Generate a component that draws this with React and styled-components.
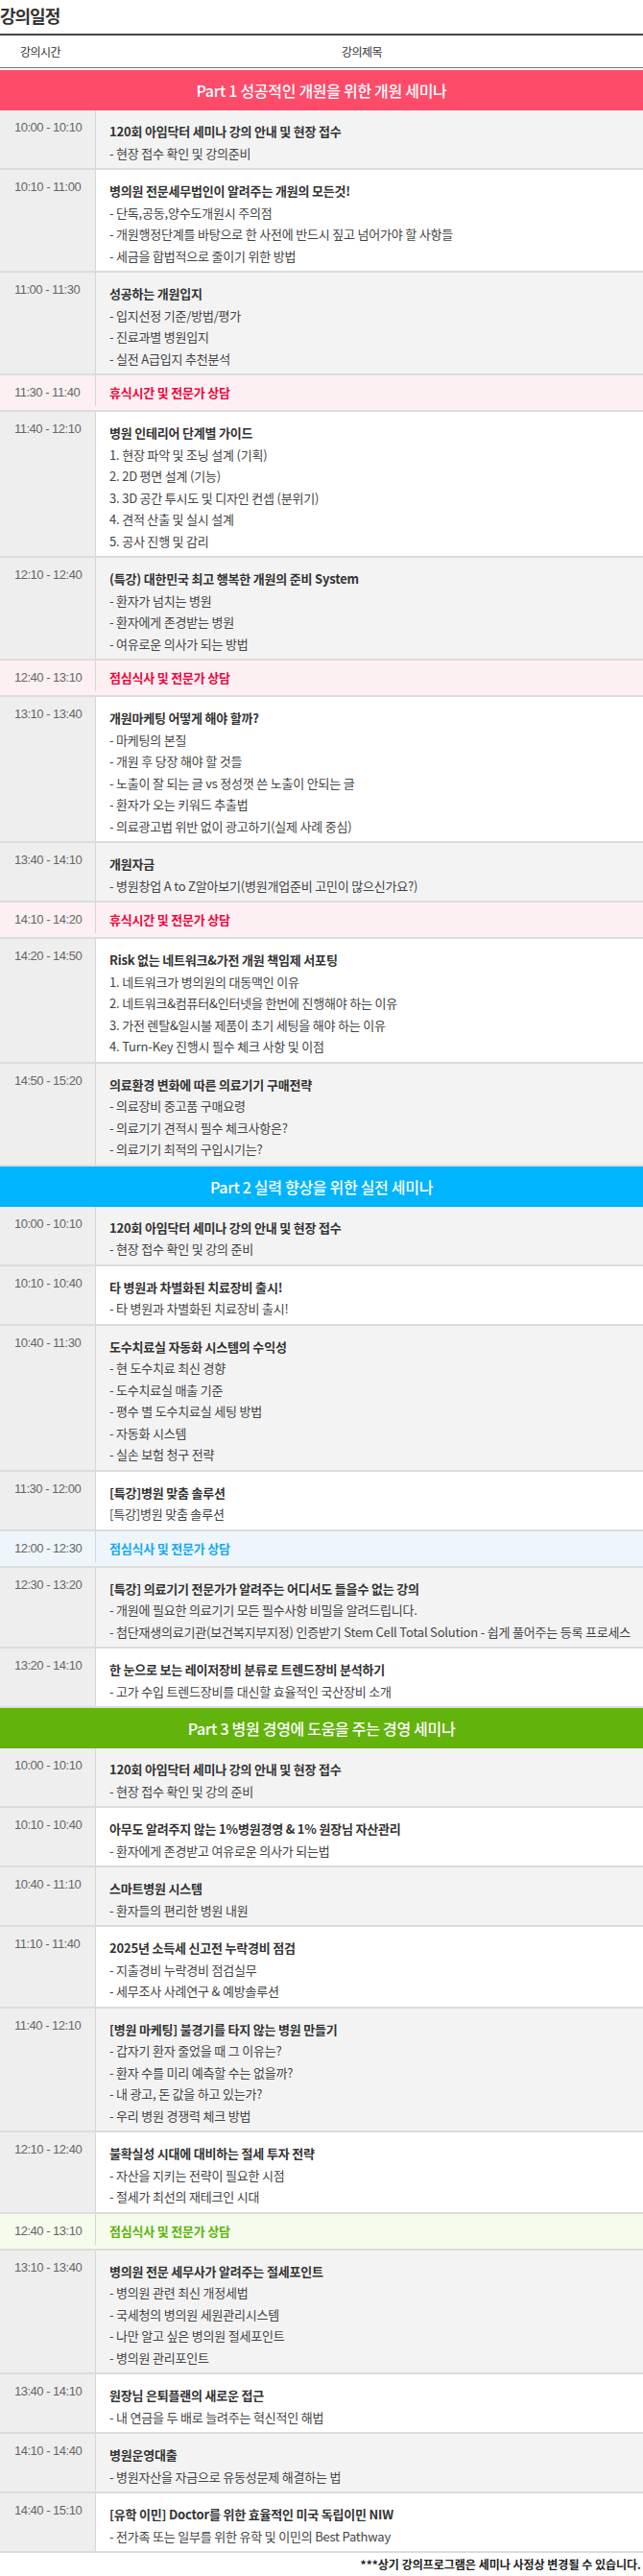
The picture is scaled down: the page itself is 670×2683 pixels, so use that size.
import React from 'react';
import styled, { createGlobalStyle } from 'styled-components';

const GlobalStyle = createGlobalStyle`
    body {
        margin: 0;
        background: #fff;
        font-family: "Noto Sans CJK KR", "Noto Sans", sans-serif;
        color: #333;
    }
`

const Page = styled.div`
    width: 670px;
`

const PageTitle = styled.h2`
    margin: 0;
    height: 35px;
    line-height: 32px;
    font-size: 18px;
    font-weight: 700;
    letter-spacing: -1px;
    color: #333;
`

const Table = styled.div`
    border-top: 2px solid #444;
`

const HeaderRow = styled.div`
    display: grid;
    grid-template-columns: 84px 1fr;
    height: 33px;
    align-items: center;
    border-bottom: 1px solid #777;
    margin-bottom: 2px;
`

const HeaderCell = styled.div`
    text-align: center;
    font-size: 12px;
    letter-spacing: -0.5px;
    color: #333;
`

const PartBanner = styled.div`
    height: 42px;
    line-height: 42px;
    background: ${props => props.color};
    color: #fff;
    text-align: center;
    font-size: 16px;
    letter-spacing: -0.3px;
    font-weight: 500;
`

const Row = styled.div`
    display: grid;
    grid-template-columns: 100px 1fr;
    border-bottom: 2px solid #dcdcdc;
    background: ${props => props.bg};
`

const TimeCell = styled.div`
    padding: 7px 0 0 15px;
    background: ${props => props.$break ? 'transparent' : '#eee'};
    border-right: 1px solid #d6d6d6;
    margin-bottom: ${props => props.$break ? '4px' : '0'};
    font-family: "Liberation Sans", Arial, sans-serif;
    font-size: 13px;
    letter-spacing: -0.5px;
    line-height: 22px;
    color: #666;
`

const Content = styled.div`
    padding: ${props => props.$break ? '7px 14px' : '11px 14px 4px'};
    line-height: ${props => props.$break ? '22px' : '22.5px'};
    font-size: 13px;
    letter-spacing: -0.2px;
    white-space: nowrap;
`

const LectureTitle = styled.div`
    font-weight: 700;
    color: ${props => props.color || '#333'};
`

const Line = styled.div`
    color: #444;
`

const Note = styled.p`
    margin: 0;
    padding: 3px 2px 0 0;
    text-align: right;
    font-size: 12px;
    font-weight: 700;
    line-height: 18px;
    color: #222;
`

const parts = [
    {
        title: 'Part 1 성공적인 개원을 위한 개원 세미나',
        color: '#ff4b6a',
        breakBg: '#fcf0f2',
        breakColor: '#f0063f',
        items: [
            { tone: 'gray', time: '10:00 - 10:10', title: '120회 아임닥터 세미나 강의 안내 및 현장 접수', lines: ['- 현장 접수 확인 및 강의준비'] },
            { tone: 'white', time: '10:10 - 11:00', title: '병의원 전문세무법인이 알려주는 개원의 모든것!', lines: ['- 단독,공동,양수도개원시 주의점', '- 개원행정단계를 바탕으로 한 사전에 반드시 짚고 넘어가야 할 사항들', '- 세금을 합법적으로 줄이기 위한 방법'] },
            { tone: 'gray', time: '11:00 - 11:30', title: '성공하는 개원입지', lines: ['- 입지선정 기준/방법/평가', '- 진료과별 병원입지', '- 실전 A급입지 추천분석'] },
            { tone: 'break', time: '11:30 - 11:40', title: '휴식시간 및 전문가 상담' },
            { tone: 'white', time: '11:40 - 12:10', title: '병원 인테리어 단계별 가이드', lines: ['1. 현장 파악 및 조닝 설계 (기획)', '2. 2D 평면 설계 (기능)', '3. 3D 공간 투시도 및 디자인 컨셉 (분위기)', '4. 견적 산출 및 실시 설계', '5. 공사 진행 및 감리'] },
            { tone: 'gray', time: '12:10 - 12:40', title: '(특강) 대한민국 최고 행복한 개원의 준비 System', lines: ['- 환자가 넘치는 병원', '- 환자에게 존경받는 병원', '- 여유로운 의사가 되는 방법'] },
            { tone: 'break', time: '12:40 - 13:10', title: '점심식사 및 전문가 상담' },
            { tone: 'white', time: '13:10 - 13:40', title: '개원마케팅 어떻게 해야 할까?', lines: ['- 마케팅의 본질', '- 개원 후 당장 해야 할 것들', '- 노출이 잘 되는 글 vs 정성껏 쓴 노출이 안되는 글', '- 환자가 오는 키워드 추출법', '- 의료광고법 위반 없이 광고하기(실제 사례 중심)'] },
            { tone: 'gray', time: '13:40 - 14:10', title: '개원자금', lines: ['- 병원창업 A to Z알아보기(병원개업준비 고민이 많으신가요?)'] },
            { tone: 'break', time: '14:10 - 14:20', title: '휴식시간 및 전문가 상담' },
            { tone: 'white', time: '14:20 - 14:50', title: 'Risk 없는 네트워크&가전 개원 책임제 서포팅', lines: ['1. 네트워크가 병의원의 대동맥인 이유', '2. 네트워크&컴퓨터&인터넷을 한번에 진행해야 하는 이유', '3. 가전 렌탈&일시불 제품이 초기 세팅을 해야 하는 이유', '4. Turn-Key 진행시 필수 체크 사항 및 이점'] },
            { tone: 'gray', time: '14:50 - 15:20', title: '의료환경 변화에 따른 의료기기 구매전략', lines: ['- 의료장비 중고품 구매요령', '- 의료기기 견적시 필수 체크사항은?', '- 의료기기 최적의 구입시기는?'] },
        ],
    },
    {
        title: 'Part 2 실력 향상을 위한 실전 세미나',
        color: '#00b4ff',
        breakBg: '#eef6fc',
        breakColor: '#14aaf0',
        items: [
            { tone: 'gray', time: '10:00 - 10:10', title: '120회 아임닥터 세미나 강의 안내 및 현장 접수', lines: ['- 현장 접수 확인 및 강의 준비'] },
            { tone: 'white', time: '10:10 - 10:40', title: '타 병원과 차별화된 치료장비 출시!', lines: ['- 타 병원과 차별화된 치료장비 출시!'] },
            { tone: 'gray', time: '10:40 - 11:30', title: '도수치료실 자동화 시스템의 수익성', lines: ['- 현 도수치료 최신 경향', '- 도수치료실 매출 기준', '- 평수 별 도수치료실 세팅 방법', '- 자동화 시스템', '- 실손 보험 청구 전략'] },
            { tone: 'white', time: '11:30 - 12:00', title: '[특강]병원 맞춤 솔루션', lines: ['[특강]병원 맞춤 솔루션'] },
            { tone: 'break', time: '12:00 - 12:30', title: '점심식사 및 전문가 상담' },
            { tone: 'gray', time: '12:30 - 13:20', title: '[특강] 의료기기 전문가가 알려주는 어디서도 들을수 없는 강의', lines: ['- 개원에 필요한 의료기기 모든 필수사항 비밀을 알려드립니다.', '- 첨단재생의료기관(보건복지부지정) 인증받기 Stem Cell Total Solution - 쉽게 풀어주는 등록 프로세스'] },
            { tone: 'white', time: '13:20 - 14:10', title: '한 눈으로 보는 레이저장비 분류로 트렌드장비 분석하기', lines: ['- 고가 수입 트렌드장비를 대신할 효율적인 국산장비 소개'] },
        ],
    },
    {
        title: 'Part 3 병원 경영에 도움을 주는 경영 세미나',
        color: '#63b30d',
        breakBg: '#f5fcec',
        breakColor: '#5db30c',
        items: [
            { tone: 'gray', time: '10:00 - 10:10', title: '120회 아임닥터 세미나 강의 안내 및 현장 접수', lines: ['- 현장 접수 확인 및 강의 준비'] },
            { tone: 'white', time: '10:10 - 10:40', title: '아무도 알려주지 않는 1%병원경영 & 1% 원장님 자산관리', lines: ['- 환자에게 존경받고 여유로운 의사가 되는법'] },
            { tone: 'gray', time: '10:40 - 11:10', title: '스마트병원 시스템', lines: ['- 환자들의 편리한 병원 내원'] },
            { tone: 'white', time: '11:10 - 11:40', title: '2025년 소득세 신고전 누락경비 점검', lines: ['- 지출경비 누락경비 점검실무', '- 세무조사 사례연구 & 예방솔루션'] },
            { tone: 'gray', time: '11:40 - 12:10', title: '[병원 마케팅] 불경기를 타지 않는 병원 만들기', lines: ['- 갑자기 환자 줄었을 때 그 이유는?', '- 환자 수를 미리 예측할 수는 없을까?', '- 내 광고, 돈 값을 하고 있는가?', '- 우리 병원 경쟁력 체크 방법'] },
            { tone: 'white', time: '12:10 - 12:40', title: '불확실성 시대에 대비하는 절세 투자 전략', lines: ['- 자산을 지키는 전략이 필요한 시점', '- 절세가 최선의 재테크인 시대'] },
            { tone: 'break', time: '12:40 - 13:10', title: '점심식사 및 전문가 상담' },
            { tone: 'gray', time: '13:10 - 13:40', title: '병의원 전문 세무사가 알려주는 절세포인트', lines: ['- 병의원 관련 최신 개정세법', '- 국세청의 병의원 세원관리시스템', '- 나만 알고 싶은 병의원 절세포인트', '- 병의원 관리포인트'] },
            { tone: 'white', time: '13:40 - 14:10', title: '원장님 은퇴플랜의 새로운 접근', lines: ['- 내 연금을 두 배로 늘려주는 혁신적인 해법'] },
            { tone: 'gray', time: '14:10 - 14:40', title: '병원운영대출', lines: ['- 병원자산을 자금으로 유동성문제 해결하는 법'] },
            { tone: 'white', time: '14:40 - 15:10', title: '[유학 이민] Doctor를 위한 효율적인 미국 독립이민 NIW', lines: ['- 전가족 또는 일부를 위한 유학 및 이민의 Best Pathway'] },
        ],
    },
]

const rowBg = (tone, part) => {
    if (tone === 'break') return part.breakBg;
    return tone === 'gray' ? '#f3f3f3' : '#fff';
}

const Lecture = ({ item, part }) => {
    const isBreak = item.tone === 'break';
    return (
        <Row bg={rowBg(item.tone, part)}>
            <TimeCell $break={isBreak}>{item.time}</TimeCell>
            <Content $break={isBreak}>
                <LectureTitle color={isBreak ? part.breakColor : null}>{item.title}</LectureTitle>
                {(item.lines || []).map((line, i) => <Line key={i}>{line}</Line>)}
            </Content>
        </Row>
    )
}

const App = () => {
    return (
        <Page>
            <GlobalStyle />
            <PageTitle>강의일정</PageTitle>
            <Table>
                <HeaderRow>
                    <HeaderCell>강의시간</HeaderCell>
                    <HeaderCell>강의제목</HeaderCell>
                </HeaderRow>
                {parts.map(part => (
                    <React.Fragment key={part.title}>
                        <PartBanner color={part.color}>{part.title}</PartBanner>
                        {part.items.map((item, i) => <Lecture key={i} item={item} part={part} />)}
                    </React.Fragment>
                ))}
            </Table>
            <Note>***상기 강의프로그램은 세미나 사정상 변경될 수 있습니다.</Note>
        </Page>
    )
}

export default App;
